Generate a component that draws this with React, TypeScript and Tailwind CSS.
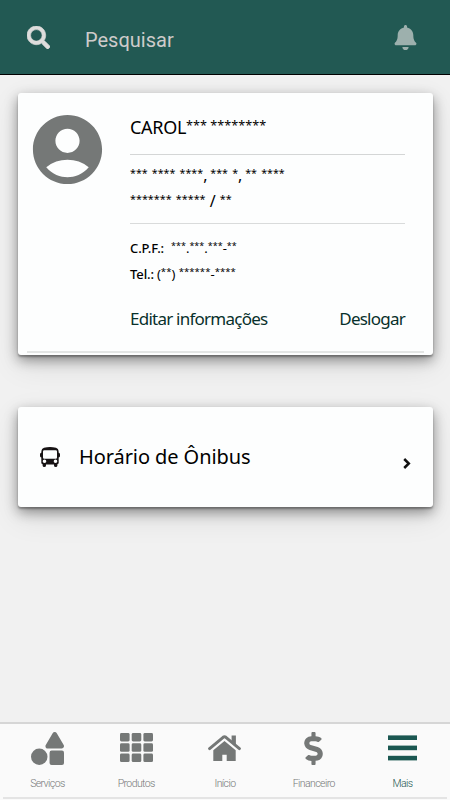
import React from "react";
import clsx from "clsx";
import {
  FaBell,
  FaDollarSign,
  FaSearch,
  FaShapes,
} from "react-icons/fa";
import { MdAccountCircle } from "react-icons/md";

const BusIcon = () => (
  <svg width="20" height="20" viewBox="0 0 20 20" fill="#171314">
    <path
      fillRule="evenodd"
      d="M4 0.8Q10-0.8 16 0.8Q18.6 1.5 18.6 4V5.4Q20 5.8 20 7.2V9Q20 10.4 18.7 10.6V15.8Q18.7 17 17.4 17.3V18.4Q17.4 20 15.7 20Q14 20 14 18.4V17.4H6V18.4Q6 20 4.3 20Q2.6 20 2.6 18.4V17.3Q1.3 17 1.3 15.8V10.6Q0 10.4 0 9V7.2Q0 5.8 1.4 5.4V4Q1.4 1.5 4 0.8ZM4.2 3.2Q3 3.2 3 4.4V10.5Q3 11.7 4.2 11.7H15.8Q17 11.7 17 10.5V4.4Q17 3.2 15.8 3.2ZM4.5 12.5A1.8 1.8 0 1 0 4.5 16.1A1.8 1.8 0 1 0 4.5 12.5ZM15.5 12.5A1.8 1.8 0 1 0 15.5 16.1A1.8 1.8 0 1 0 15.5 12.5Z"
    />
  </svg>
);

const GridIcon = () => (
  <svg width="33" height="30" viewBox="0 0 33 30" fill="currentColor">
    {[0, 10.3, 20.6].map((y) =>
      [0, 11.7, 23.4].map((x) => (
        <rect key={`${x}-${y}`} x={x} y={y} width="9.6" height="8.5" rx="1.4" />
      )),
    )}
  </svg>
);

const HomeIcon = () => (
  <svg width="33" height="28" viewBox="0 0 33 28" fill="currentColor">
    <path
      d="M1.6 14.6L15.1 3.3Q16.5 2.2 17.9 3.3L31.4 14.6"
      fill="none"
      stroke="currentColor"
      strokeWidth="3"
      strokeLinecap="round"
    />
    <path d="M23.6 1.4H27.9V11L23.6 7.6Z" />
    <path d="M16.5 7L27.7 16.3V27H18.7V20.8H14.3V27H5.3V16.3Z" />
  </svg>
);

const MenuIcon = () => (
  <svg width="29" height="26" viewBox="0 0 29 26" fill="#1b5751">
    <rect y="0.4" width="29" height="4.6" />
    <rect y="10.6" width="29" height="4.6" />
    <rect y="20.8" width="29" height="4.6" />
  </svg>
);

// Masked characters are drawn smaller and raised a little
const Masked = ({ text, starClass }: { text: string; starClass: string }) => (
  <>
    {text.split(/(\*+)/).map((part, i) =>
      part.startsWith("*") ? (
        <span key={i} className={clsx("relative leading-none", starClass)}>
          {part}
        </span>
      ) : (
        <span key={i}>{part}</span>
      ),
    )}
  </>
);

const tabs = [
  { label: "Serviços", icon: <FaShapes size={33} /> },
  { label: "Produtos", icon: <GridIcon /> },
  { label: "Início", icon: <HomeIcon /> },
  { label: "Financeiro", icon: <FaDollarSign size={33} /> },
  { label: "Mais", icon: <MenuIcon />, active: true },
];

const cardShadow =
  "rounded-[3px] bg-[#fdfefe] shadow-[0_2px_2px_rgba(0,0,0,0.3),0_5px_13px_rgba(0,0,0,0.4),0_10px_30px_rgba(0,0,0,0.1)]";

const App = () => {
  return (
    <div className="flex h-[800px] w-[450px] flex-col overflow-hidden bg-[#f1f1f1] font-['Noto_Sans',sans-serif] text-black">
      <header className="flex h-[75px] shrink-0 items-center border-b border-black bg-[#225953] px-[27px]">
        <FaSearch
          size={23}
          className="text-[#dedddc]"
          stroke="currentColor"
          strokeWidth={14}
        />
        <div className="ml-[35px] grow pt-[5px] font-['Roboto',sans-serif] text-[20px] text-[#cecbca]">
          Pesquisar
        </div>
        <FaBell size={25} className="mr-[5px] text-[#9db0ad]" />
      </header>

      <main className="grow px-[17.5px] pt-[18px]">
        <section className={clsx("flex h-[262px] w-[415px] flex-col", cardShadow)}>
          <div className="flex grow">
            <div className="w-[112.5px] shrink-0 pt-[15px] pl-[8.5px]">
              <MdAccountCircle size={83} className="text-[#757877]" />
            </div>
            <div className="w-[275px]">
              <div className="flex h-[62px] items-center border-b border-[#d4d6d6] pt-[7px] text-[18px] whitespace-pre">
                <div>
                  <span className="tracking-[-0.3px]">CAROL</span>
                  <span className="relative top-[-4px] text-[12.7px]">
                    *** ********
                  </span>
                </div>
              </div>
              <div className="h-[69px] border-b border-[#d9dbdb] pt-[7px] text-[16px] leading-[26px] whitespace-nowrap">
                <div className="tracking-[-1.3px] [word-spacing:1.3px]">
                  <Masked
                    text="*** **** ****, *** *, ** ****"
                    starClass="top-[-4px] text-[10.7px] tracking-normal"
                  />
                </div>
                <div>
                  <Masked
                    text="******* ***** / **"
                    starClass="top-[-4px] text-[10.8px]"
                  />
                </div>
              </div>
              <div className="pt-[11px] text-[13px] leading-[26px] whitespace-nowrap">
                <div>
                  <span className="font-medium tracking-[-0.1px]">C.P.F.:</span>
                  <span className="ml-[7px]">
                    <Masked
                      text="***.***.***-**"
                      starClass="top-[-4px] text-[9px]"
                    />
                  </span>
                </div>
                <div>
                  <span className="font-medium tracking-[-0.1px]">Tel.:</span>
                  <span className="ml-[3px]">
                    <Masked
                      text="(**) ******-****"
                      starClass="top-[-4px] text-[9.6px]"
                    />
                  </span>
                </div>
              </div>
              <div className="mt-[19px] flex justify-between text-[17px] leading-[26px] tracking-[-0.76px] text-[#08302b]">
                <button>Editar informações</button>
                <button>Deslogar</button>
              </div>
            </div>
          </div>
          <div className="mx-[9px] mb-[2px] h-[2px] shrink-0 bg-[#e3e5e4]" />
        </section>

        <section
          className={clsx("mt-[52px] flex h-[100px] w-[415px] items-center", cardShadow)}
        >
          <div className="ml-[22.5px]">
            <BusIcon />
          </div>
          <div className="ml-[19px] grow text-[20px] tracking-[-0.08px]">
            Horário de Ônibus
          </div>
          <svg
            width="8"
            height="11"
            viewBox="0 0 8 11"
            className="mt-[13px] mr-[22px]"
            fill="none"
            stroke="#111"
            strokeWidth="2.5"
          >
            <path d="M1.2 1L5.8 5.5L1.2 10" />
          </svg>
        </section>
      </main>

      <nav className="h-[78px] shrink-0 border-t-2 border-[#d6d6d6] bg-[#fafafa] px-[3px]">
        <div className="flex h-[75px] border-b-2 border-[#e4e4e4]">
          {tabs.map((tab) => (
            <div
              key={tab.label}
              className={clsx(
                "flex flex-1 flex-col items-center",
                tab.active ? "text-[#1b5751]" : "text-[#757877]",
              )}
            >
              <div className="flex h-[48px] items-center">{tab.icon}</div>
              <div className="mt-[4px] font-['Roboto',sans-serif] text-[10.5px] leading-[16px] font-light tracking-[-0.6px]">
                {tab.label}
              </div>
            </div>
          ))}
        </div>
      </nav>
    </div>
  );
};

export default App;
